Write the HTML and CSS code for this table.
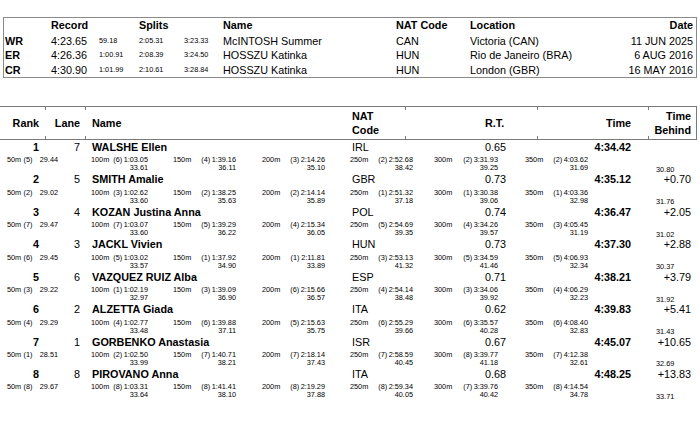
FILE: index.html
```html
<!DOCTYPE html>
<html>
<head>
<meta charset="utf-8">
<link rel="stylesheet" href="styles.css">
</head>
<body>
<div class="rec">
  <div class="h"></div><div class="h">Record</div><div class="h"></div><div class="h">Splits</div><div class="h"></div><div class="h">Name</div><div class="h">NAT Code</div><div class="h">Location</div><div class="h r">Date</div>

  <div class="b">WR</div><div>4:23.65</div><div class="s">59.18</div><div class="s">2:05.31</div><div class="s">3:23.33</div><div>McINTOSH Summer</div><div>CAN</div><div>Victoria (CAN)</div><div class="r">11 JUN 2025</div>

  <div class="b">ER</div><div>4:26.36</div><div class="s">1:00.91</div><div class="s">2:08.39</div><div class="s">3:24.50</div><div>HOSSZU Katinka</div><div>HUN</div><div>Rio de Janeiro (BRA)</div><div class="r">6 AUG 2016</div>

  <div class="b">CR</div><div>4:30.90</div><div class="s">1:01.99</div><div class="s">2:10.61</div><div class="s">3:28.84</div><div>HOSSZU Katinka</div><div>HUN</div><div>London (GBR)</div><div class="r">16 MAY 2016</div>
</div>

<div class="res-head">
  <div class="r">Rank</div><div class="r">Lane</div><div class="nm">Name</div><div>NAT<br>Code</div><div>R.T.</div><div class="r">Time</div><div class="r">Time<br>Behind</div><div></div>
</div>

<div class="ath">
  <div class="main"><div class="r b">1</div><div class="r">7</div><div class="nm b">WALSHE Ellen</div><div>IRL</div><div>0.65</div><div class="r b">4:34.42</div><div class="r"></div></div>
  <div class="splits">
    <div class="sp"><div class="l"><span>50m</span><span class="p">(5)</span><span class="t">29.44</span></div></div>
    <div class="sp"><div class="l"><span>100m</span><span class="p">(6)</span><span class="t">1:03.05</span></div><div class="lap">33.61</div></div>
    <div class="sp"><div class="l"><span>150m</span><span class="p">(4)</span><span class="t">1:39.16</span></div><div class="lap">36.11</div></div>
    <div class="sp"><div class="l"><span>200m</span><span class="p">(3)</span><span class="t">2:14.26</span></div><div class="lap">35.10</div></div>
    <div class="sp"><div class="l"><span>250m</span><span class="p">(2)</span><span class="t">2:52.68</span></div><div class="lap">38.42</div></div>
    <div class="sp"><div class="l"><span>300m</span><span class="p">(2)</span><span class="t">3:31.93</span></div><div class="lap">39.25</div></div>
    <div class="sp"><div class="l"><span>350m</span><span class="p">(2)</span><span class="t">4:03.62</span></div><div class="lap">31.69</div></div>
    <div class="last">30.80</div>
  </div>
</div>

<div class="ath">
  <div class="main"><div class="r b">2</div><div class="r">5</div><div class="nm b">SMITH Amalie</div><div>GBR</div><div>0.73</div><div class="r b">4:35.12</div><div class="r">+0.70</div></div>
  <div class="splits">
    <div class="sp"><div class="l"><span>50m</span><span class="p">(2)</span><span class="t">29.02</span></div></div>
    <div class="sp"><div class="l"><span>100m</span><span class="p">(3)</span><span class="t">1:02.62</span></div><div class="lap">33.60</div></div>
    <div class="sp"><div class="l"><span>150m</span><span class="p">(2)</span><span class="t">1:38.25</span></div><div class="lap">35.63</div></div>
    <div class="sp"><div class="l"><span>200m</span><span class="p">(2)</span><span class="t">2:14.14</span></div><div class="lap">35.89</div></div>
    <div class="sp"><div class="l"><span>250m</span><span class="p">(1)</span><span class="t">2:51.32</span></div><div class="lap">37.18</div></div>
    <div class="sp"><div class="l"><span>300m</span><span class="p">(1)</span><span class="t">3:30.38</span></div><div class="lap">39.06</div></div>
    <div class="sp"><div class="l"><span>350m</span><span class="p">(1)</span><span class="t">4:03.36</span></div><div class="lap">32.98</div></div>
    <div class="last">31.76</div>
  </div>
</div>

<div class="ath">
  <div class="main"><div class="r b">3</div><div class="r">4</div><div class="nm b">KOZAN Justina Anna</div><div>POL</div><div>0.74</div><div class="r b">4:36.47</div><div class="r">+2.05</div></div>
  <div class="splits">
    <div class="sp"><div class="l"><span>50m</span><span class="p">(7)</span><span class="t">29.47</span></div></div>
    <div class="sp"><div class="l"><span>100m</span><span class="p">(7)</span><span class="t">1:03.07</span></div><div class="lap">33.60</div></div>
    <div class="sp"><div class="l"><span>150m</span><span class="p">(5)</span><span class="t">1:39.29</span></div><div class="lap">36.22</div></div>
    <div class="sp"><div class="l"><span>200m</span><span class="p">(4)</span><span class="t">2:15.34</span></div><div class="lap">36.05</div></div>
    <div class="sp"><div class="l"><span>250m</span><span class="p">(5)</span><span class="t">2:54.69</span></div><div class="lap">39.35</div></div>
    <div class="sp"><div class="l"><span>300m</span><span class="p">(4)</span><span class="t">3:34.26</span></div><div class="lap">39.57</div></div>
    <div class="sp"><div class="l"><span>350m</span><span class="p">(3)</span><span class="t">4:05.45</span></div><div class="lap">31.19</div></div>
    <div class="last">31.02</div>
  </div>
</div>

<div class="ath">
  <div class="main"><div class="r b">4</div><div class="r">3</div><div class="nm b">JACKL Vivien</div><div>HUN</div><div>0.73</div><div class="r b">4:37.30</div><div class="r">+2.88</div></div>
  <div class="splits">
    <div class="sp"><div class="l"><span>50m</span><span class="p">(6)</span><span class="t">29.45</span></div></div>
    <div class="sp"><div class="l"><span>100m</span><span class="p">(5)</span><span class="t">1:03.02</span></div><div class="lap">33.57</div></div>
    <div class="sp"><div class="l"><span>150m</span><span class="p">(1)</span><span class="t">1:37.92</span></div><div class="lap">34.90</div></div>
    <div class="sp"><div class="l"><span>200m</span><span class="p">(1)</span><span class="t">2:11.81</span></div><div class="lap">33.89</div></div>
    <div class="sp"><div class="l"><span>250m</span><span class="p">(3)</span><span class="t">2:53.13</span></div><div class="lap">41.32</div></div>
    <div class="sp"><div class="l"><span>300m</span><span class="p">(5)</span><span class="t">3:34.59</span></div><div class="lap">41.46</div></div>
    <div class="sp"><div class="l"><span>350m</span><span class="p">(5)</span><span class="t">4:06.93</span></div><div class="lap">32.34</div></div>
    <div class="last">30.37</div>
  </div>
</div>

<div class="ath">
  <div class="main"><div class="r b">5</div><div class="r">6</div><div class="nm b">VAZQUEZ RUIZ Alba</div><div>ESP</div><div>0.71</div><div class="r b">4:38.21</div><div class="r">+3.79</div></div>
  <div class="splits">
    <div class="sp"><div class="l"><span>50m</span><span class="p">(3)</span><span class="t">29.22</span></div></div>
    <div class="sp"><div class="l"><span>100m</span><span class="p">(1)</span><span class="t">1:02.19</span></div><div class="lap">32.97</div></div>
    <div class="sp"><div class="l"><span>150m</span><span class="p">(3)</span><span class="t">1:39.09</span></div><div class="lap">36.90</div></div>
    <div class="sp"><div class="l"><span>200m</span><span class="p">(6)</span><span class="t">2:15.66</span></div><div class="lap">36.57</div></div>
    <div class="sp"><div class="l"><span>250m</span><span class="p">(4)</span><span class="t">2:54.14</span></div><div class="lap">38.48</div></div>
    <div class="sp"><div class="l"><span>300m</span><span class="p">(3)</span><span class="t">3:34.06</span></div><div class="lap">39.92</div></div>
    <div class="sp"><div class="l"><span>350m</span><span class="p">(4)</span><span class="t">4:06.29</span></div><div class="lap">32.23</div></div>
    <div class="last">31.92</div>
  </div>
</div>

<div class="ath">
  <div class="main"><div class="r b">6</div><div class="r">2</div><div class="nm b">ALZETTA Giada</div><div>ITA</div><div>0.62</div><div class="r b">4:39.83</div><div class="r">+5.41</div></div>
  <div class="splits">
    <div class="sp"><div class="l"><span>50m</span><span class="p">(4)</span><span class="t">29.29</span></div></div>
    <div class="sp"><div class="l"><span>100m</span><span class="p">(4)</span><span class="t">1:02.77</span></div><div class="lap">33.48</div></div>
    <div class="sp"><div class="l"><span>150m</span><span class="p">(6)</span><span class="t">1:39.88</span></div><div class="lap">37.11</div></div>
    <div class="sp"><div class="l"><span>200m</span><span class="p">(5)</span><span class="t">2:15.63</span></div><div class="lap">35.75</div></div>
    <div class="sp"><div class="l"><span>250m</span><span class="p">(6)</span><span class="t">2:55.29</span></div><div class="lap">39.66</div></div>
    <div class="sp"><div class="l"><span>300m</span><span class="p">(6)</span><span class="t">3:35.57</span></div><div class="lap">40.28</div></div>
    <div class="sp"><div class="l"><span>350m</span><span class="p">(6)</span><span class="t">4:08.40</span></div><div class="lap">32.83</div></div>
    <div class="last">31.43</div>
  </div>
</div>

<div class="ath">
  <div class="main"><div class="r b">7</div><div class="r">1</div><div class="nm b">GORBENKO Anastasia</div><div>ISR</div><div>0.67</div><div class="r b">4:45.07</div><div class="r">+10.65</div></div>
  <div class="splits">
    <div class="sp"><div class="l"><span>50m</span><span class="p">(1)</span><span class="t">28.51</span></div></div>
    <div class="sp"><div class="l"><span>100m</span><span class="p">(2)</span><span class="t">1:02.50</span></div><div class="lap">33.99</div></div>
    <div class="sp"><div class="l"><span>150m</span><span class="p">(7)</span><span class="t">1:40.71</span></div><div class="lap">38.21</div></div>
    <div class="sp"><div class="l"><span>200m</span><span class="p">(7)</span><span class="t">2:18.14</span></div><div class="lap">37.43</div></div>
    <div class="sp"><div class="l"><span>250m</span><span class="p">(7)</span><span class="t">2:58.59</span></div><div class="lap">40.45</div></div>
    <div class="sp"><div class="l"><span>300m</span><span class="p">(8)</span><span class="t">3:39.77</span></div><div class="lap">41.18</div></div>
    <div class="sp"><div class="l"><span>350m</span><span class="p">(7)</span><span class="t">4:12.38</span></div><div class="lap">32.61</div></div>
    <div class="last">32.69</div>
  </div>
</div>

<div class="ath">
  <div class="main"><div class="r b">8</div><div class="r">8</div><div class="nm b">PIROVANO Anna</div><div>ITA</div><div>0.68</div><div class="r b">4:48.25</div><div class="r">+13.83</div></div>
  <div class="splits">
    <div class="sp"><div class="l"><span>50m</span><span class="p">(8)</span><span class="t">29.67</span></div></div>
    <div class="sp"><div class="l"><span>100m</span><span class="p">(8)</span><span class="t">1:03.31</span></div><div class="lap">33.64</div></div>
    <div class="sp"><div class="l"><span>150m</span><span class="p">(8)</span><span class="t">1:41.41</span></div><div class="lap">38.10</div></div>
    <div class="sp"><div class="l"><span>200m</span><span class="p">(8)</span><span class="t">2:19.29</span></div><div class="lap">37.88</div></div>
    <div class="sp"><div class="l"><span>250m</span><span class="p">(8)</span><span class="t">2:59.34</span></div><div class="lap">40.05</div></div>
    <div class="sp"><div class="l"><span>300m</span><span class="p">(7)</span><span class="t">3:39.76</span></div><div class="lap">40.42</div></div>
    <div class="sp"><div class="l"><span>350m</span><span class="p">(8)</span><span class="t">4:14.54</span></div><div class="lap">34.78</div></div>
    <div class="last">33.71</div>
  </div>
</div>
</body>
</html>
```
FILE: styles.css
```css
body {
  margin: 0;
  background: #fff;
  color: #000;
  font-family: "Liberation Sans", Arial, sans-serif;
}

.b { font-weight: bold; }
.r { text-align: right; }

/* Records box */
.rec {
  margin: 17px 3px 0;
  border: 1px solid #8a8a8a;
  padding: 0 3px 0 1px;
  display: grid;
  grid-template-columns: 46px 48px 40px 45px 39px 173px 74px 1fr auto;
  font-size: 10.8px;
  line-height: 14.5px;
  white-space: nowrap;
}
.rec .h {
  font-weight: bold;
  line-height: 15.5px;
}
.rec .s {
  font-size: 7.3px;
}

/* Results header */
.res-head {
  margin: 28px 3px 0 0;
  height: 32px;
  border-top: 1px solid #7a7a7a;
  border-bottom: 1px solid #7a7a7a;
  border-right: 1px solid #7a7a7a;
  display: grid;
  grid-template-columns: 39px 41px 272px 133px 55px 91px 60px 1fr;
  align-items: center;
  font-size: 10.8px;
  line-height: 14px;
  font-weight: bold;
  background:
    linear-gradient(#7a7a7a, #7a7a7a) 45px 0 / 1px 3px no-repeat,
    linear-gradient(#7a7a7a, #7a7a7a) 85px 0 / 1px 3px no-repeat,
    linear-gradient(#7a7a7a, #7a7a7a) 405px 0 / 1px 3px no-repeat,
    linear-gradient(#7a7a7a, #7a7a7a) 537px 0 / 1px 3px no-repeat,
    linear-gradient(#7a7a7a, #7a7a7a) 648px 0 / 1px 3px no-repeat,
    linear-gradient(#7a7a7a, #7a7a7a) 45px 100% / 1px 3px no-repeat,
    linear-gradient(#7a7a7a, #7a7a7a) 85px 100% / 1px 3px no-repeat,
    linear-gradient(#7a7a7a, #7a7a7a) 405px 100% / 1px 3px no-repeat,
    linear-gradient(#7a7a7a, #7a7a7a) 537px 100% / 1px 3px no-repeat,
    linear-gradient(#7a7a7a, #7a7a7a) 648px 100% / 1px 3px no-repeat;
}
.nm { padding-left: 12px; }

/* Athlete rows */
.main {
  display: grid;
  grid-template-columns: 39px 41px 272px 133px 55px 91px 60px 1fr;
  height: 14px;
  font-size: 10.8px;
  line-height: 14px;
  white-space: nowrap;
}

.splits {
  display: grid;
  grid-template-columns: 84px 82px 89px 88px 84px 91px 131px 1fr;
  padding: 2.43px 0 0 7px;
  height: 16px;
  font-size: 7.3px;
  line-height: 8px;
  white-space: nowrap;
}
.sp .l { display: flex; }
.sp .p { margin-left: auto; }
.sp .t { min-width: 24px; margin-left: 1.5px; text-align: right; }
.sp .lap { text-align: right; }

.splits > :nth-child(1) { width: 51px; }
.splits > :nth-child(2) { width: 57px; }
.splits > :nth-child(3) { width: 63px; }
.splits > :nth-child(4) { width: 63px; }
.splits > :nth-child(5) { width: 63px; }
.splits > :nth-child(6) { width: 64px; }
.splits > :nth-child(7) { width: 63px; }

.last {
  padding-top: 9.5px;
}
```
